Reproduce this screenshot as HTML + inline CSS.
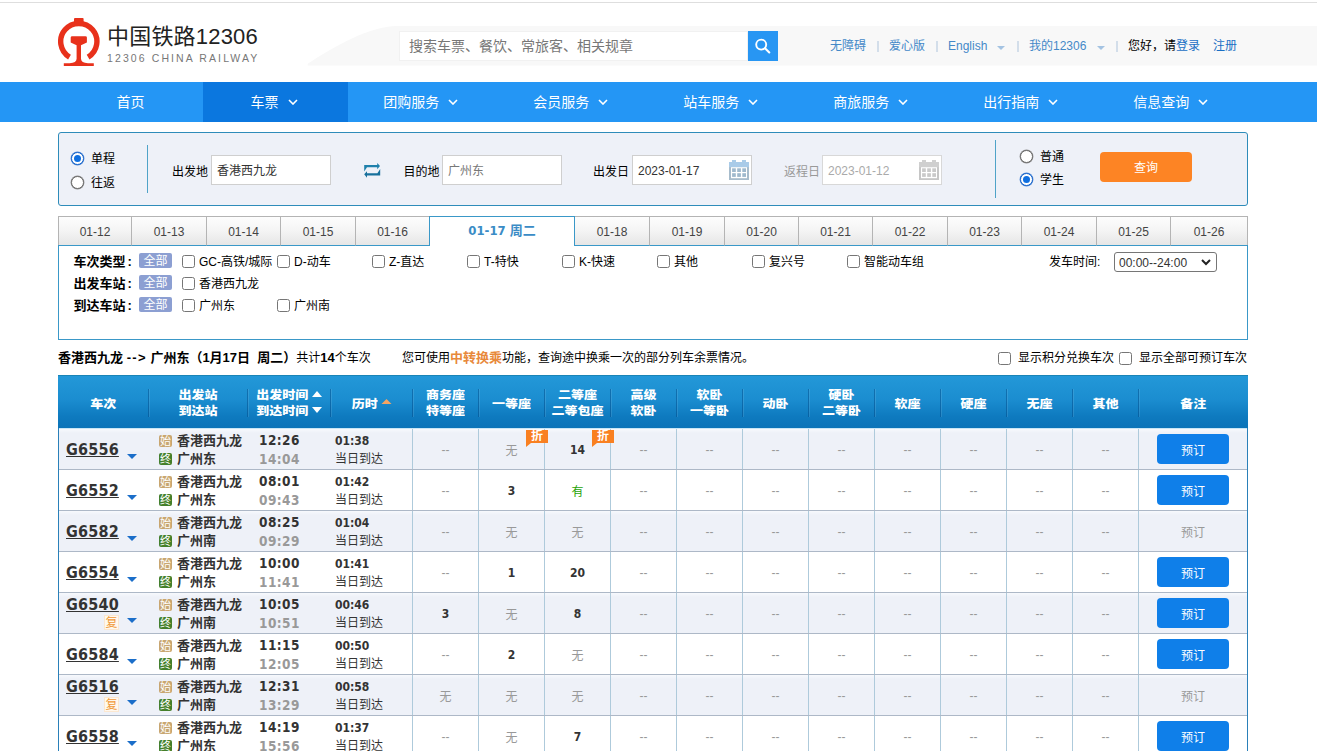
<!DOCTYPE html>
<html lang="zh-CN">
<head>
<meta charset="utf-8">
<title>车票预订 | 中国铁路12306</title>
<style>
*{box-sizing:border-box;margin:0;padding:0}
html,body{width:1317px;height:751px;overflow:hidden;background:#fff}
body{font-family:"Liberation Sans","Noto Sans CJK SC",sans-serif;font-size:12px;color:#000;position:relative}
a{text-decoration:none;color:inherit}
.abs{position:absolute}
/* header */
#topline{position:absolute;left:0;top:2px;width:1317px;height:1px;background:#dedede}
#band{position:absolute;left:300px;top:26px}
#logo{position:absolute;left:58px;top:18px}
#ltitle{position:absolute;left:107px;top:22px;font-size:22px;line-height:30px;color:#222;white-space:nowrap;letter-spacing:.2px}
#lsub{position:absolute;left:107px;top:51px;font-size:10.500px;line-height:14px;color:#777;white-space:nowrap;letter-spacing:2.1px}
#search{position:absolute;left:399px;top:31px;width:349px;height:30px;background:#fff;border:1px solid #f1f1f1;font-size:14px;line-height:28px;color:#777;padding-left:9px;white-space:nowrap}
#sbtn{position:absolute;left:748px;top:31px;width:30px;height:30px;background:#2896f3}
.tl{position:absolute;top:38px;font-size:12px;line-height:16px;color:#4489c8;white-space:nowrap}
.tsep{position:absolute;top:41px;width:2px;height:11px;background:#d3deea}
.tarr{position:absolute;top:45.500px;width:0;height:0;border-left:4px solid transparent;border-right:4px solid transparent;border-top:4px solid #a4c3e2;margin-left:2px}
/* nav */
#nav{position:absolute;left:0;top:82px;width:1317px;height:40px;background:#2496f5}
#nav .it{position:absolute;top:0;height:40px;line-height:40px;font-size:14px;color:#fff;text-align:center;white-space:nowrap;padding-right:3px}
#nav .it.on{background:#0b77df}
#nav svg{display:inline-block;vertical-align:middle;margin-left:9px;margin-top:-2px}
/*GEN*/
/* search panel */
#sp{position:absolute;left:58px;top:132px;width:1190px;height:74px;background:#eef1f8;border:1px solid #2e8cba;border-radius:3px}
.rad{position:absolute;width:13px;height:13px;border-radius:50%;border:1px solid #6a6a6a;background:#fff;box-shadow:0 0 0 .4px #8a8a8a}
.rad.on{border:1px solid #1763c9;box-shadow:0 0 0 .4px #4a86d6}
.rad.on:after{content:"";position:absolute;left:2px;top:2px;width:7px;height:7px;border-radius:50%;background:#0f6fe0}
.lb{position:absolute;font-size:12px;line-height:14px;white-space:nowrap;color:#000}
.vdiv{position:absolute;width:1px;background:#4fa3c8}
.inp{position:absolute;top:155px;width:120px;height:30px;background:#fff;border:1px solid #cfcfcf;font-size:12px;line-height:30px;padding-left:5px;color:#333;white-space:nowrap}
#qbtn{position:absolute;left:1100px;top:152px;width:92px;height:30px;border-radius:4px;background:#fd8424;color:#fff;font-size:12px;line-height:33px;text-align:center}
/* tabs */
.tab{position:absolute;top:216px;height:30px;border:1px solid #b4b4b4;border-left:none;border-bottom:1px solid #3a98c8;background:linear-gradient(#fdfdfd,#f4f4f4 50%,#e6e6e6);font-size:12px;line-height:30px;text-align:center;color:#444}
.tab.on{background:#fff;border:1px solid #3a98c8;border-bottom:none;color:#3a8cc6;font-weight:bold;font-size:13px;line-height:27px;font-family:"DejaVu Sans Condensed","DejaVu Sans","Noto Sans CJK SC",sans-serif;font-stretch:condensed}
/* filter */
#flt{position:absolute;left:58px;top:245px;width:1190px;height:95px;border:1px solid #3a98c8;border-top:none}
.fl{position:absolute;left:73.500px;font-size:13px;line-height:14px;font-weight:bold;white-space:nowrap;letter-spacing:0;font-family:"Liberation Sans","Noto Sans CJK SC",sans-serif}
.all{position:absolute;left:139px;width:33px;height:15px;background:#8c9fd2;color:#fff;font-size:12px;line-height:17px;text-align:center;border-radius:2px;overflow:hidden}
.cb{position:absolute;width:13px;height:13px;border:1px solid #767676;border-radius:2.5px;background:#fff}
.cl{position:absolute;font-size:12px;line-height:14px;white-space:nowrap}
#sel{position:absolute;left:1114px;top:252px;width:103px;height:20px;border:1px solid #767676;border-radius:3px;background:#fff;font-size:12px;line-height:20px;padding-left:4px;color:#333}
/* summary */
.sm{position:absolute;top:351px;font-size:12px;line-height:14px;white-space:nowrap}
.sm b,.bb{font-size:13px;font-weight:bold;font-family:"Liberation Sans","Noto Sans CJK SC",sans-serif;letter-spacing:0}
/* table */
#th{position:absolute;left:58px;top:375px;width:1190px;height:53px;background:linear-gradient(#2398d8 0%,#1b8dd0 45%,#0e7abf 78%,#0b74b8 100%);border-top:1px solid #1a84b6}
.hc{position:absolute;color:#fff;font-weight:900;font-size:13px;line-height:16.600px;text-align:center;white-space:nowrap;letter-spacing:0;transform:scaleY(.9);transform-origin:50% 50%;font-family:"Liberation Sans","Noto Sans CJK SC",sans-serif}
.hs{position:absolute;top:13px;width:2px;height:28px;background:linear-gradient(90deg,rgba(0,70,130,.45) 50%,rgba(255,255,255,.1) 50%)}
.row{position:absolute;left:58px;width:1190px;height:41px;box-shadow:inset 0 1px 0 #adb8c7;border-left:1px solid #2a80b9;border-right:1px solid #2a80b9;background:#fff}
.row.first{box-shadow:inset 0 1px 0 #c9e6f5}
.row.odd{background:linear-gradient(#f9fbfe,#eef1f8 5px)}
.vs{position:absolute;top:1px;width:1px;height:40px;background:#aecadb}
.tn{position:absolute;left:7px;font-family:"DejaVu Sans Condensed","DejaVu Sans",sans-serif;font-stretch:condensed;font-weight:bold;font-size:16px;line-height:20px;color:#333;text-decoration:underline;text-underline-offset:1px;letter-spacing:.2px}
.tri{position:absolute;width:0;height:0;border-left:5px solid transparent;border-right:5px solid transparent;border-top:5px solid #1b6ec9}
.bg{position:absolute;left:100px;width:13px;height:12px;border-radius:2px;color:#fff;font-size:11px;line-height:12px;text-align:center;overflow:hidden;font-style:normal}
.st{position:absolute;left:118px;font-weight:bold;font-size:13px;line-height:14px;color:#333;white-space:nowrap;letter-spacing:0;font-family:"Liberation Sans","Noto Sans CJK SC",sans-serif}
.t1{position:absolute;left:200px;font-family:"DejaVu Sans Condensed","DejaVu Sans",sans-serif;font-stretch:condensed;font-weight:bold;font-size:13.500px;line-height:16px;color:#333;letter-spacing:.45px;white-space:nowrap}
.t2{color:#999}
.du{position:absolute;left:276px;font-family:"DejaVu Sans Condensed","DejaVu Sans",sans-serif;font-stretch:condensed;font-weight:bold;font-size:12px;line-height:14px;color:#333;letter-spacing:0;white-space:nowrap}
.dd{position:absolute;left:276px;font-size:12px;line-height:14px;color:#333;white-space:nowrap}
.c{position:absolute;top:15px;width:66px;height:16px;line-height:16px;text-align:center;font-size:12px;color:#999;white-space:nowrap}
.c.n{top:14.300px;color:#333;font-weight:bold;font-family:"DejaVu Sans Condensed","DejaVu Sans",sans-serif;font-stretch:condensed;letter-spacing:0;font-size:12px}
.c.y{color:#26a306}
.c.d{top:14px}
.bk{position:absolute;left:1098px;top:6px;width:72px;height:30px;border-radius:4px;background:#0f7fe9;color:#fff;font-size:12px;line-height:34px;text-align:center}
.bk.off{background:none;color:#999}
.zhe{position:absolute;top:2px;width:22px;height:13px;background:#f98021;color:#fff;font-size:12px;line-height:13px;font-weight:bold;text-align:center;font-style:normal}
.zhe:after{content:"";position:absolute;left:0;top:13px;width:0;height:0;border-top:4px solid #f98021;border-right:5px solid transparent}
.fx{position:absolute;left:45px;top:23px;width:15px;height:15px;border:1px solid #fbe7d0;background:#fff8ee;color:#f09a3a;font-size:12px;line-height:14px;text-align:center;font-style:normal}
/*/GEN*/</style>
</head>
<body>
<div id="topline"></div>
<!-- HEADER -->
<svg id="band" width="1017" height="40" viewBox="0 0 1017 40"><path d="M7.500 39.5 L8 37.5 C35 20 70 0 97 0 L1017 0 L1017 39.5 Z" fill="#f8f8f8"/></svg>
<svg id="logo" width="42" height="48" viewBox="0 0 42 48">
<path d="M11.5 39.1 A18.1 18.1 0 1 1 30.100 39.1" fill="none" stroke="#e8311b" stroke-width="5.4"/>
<rect x="16" y="0" width="9.6" height="5" rx="1" fill="#e8311b"/>
<path d="M12.700 19.6 q0-1.4 1.4-1.4 h13.4 q1.4 0 1.4 1.4 v5 l-5.900 2.6 v13.5 q0 4 7 4.5 h5.8 v2.8 H5.8 v-2.8 h5.8 q7-.5 7-4.5 v-13.5 l-5.900-2.6z" fill="#e8311b"/>
</svg>
<div id="ltitle">中国铁路12306</div>
<div id="lsub">12306 CHINA RAILWAY</div>
<div id="search">搜索车票、餐饮、常旅客、相关规章</div>
<div id="sbtn"><svg width="30" height="30" viewBox="0 0 30 30"><circle cx="13.2" cy="13.6" r="5" fill="none" stroke="#fff" stroke-width="1.9"/><path d="M17 17.3 L21.3 21.5" stroke="#fff" stroke-width="2.1" stroke-linecap="round"/></svg></div>
<a class="tl" style="left:830px">无障碍</a><i class="tsep" style="left:877px"></i>
<a class="tl" style="left:889px">爱心版</a><i class="tsep" style="left:936px"></i>
<a class="tl" style="left:948px">English</a><i class="tarr" style="left:995px"></i><i class="tsep" style="left:1017px"></i>
<a class="tl" style="left:1029px">我的12306</a><i class="tarr" style="left:1095px"></i><i class="tsep" style="left:1116px"></i>
<span class="tl" style="left:1128px;color:#000">您好，请<a style="color:#1a6fc4">登录</a></span>
<a class="tl" style="left:1213px;color:#1a6fc4">注册</a>
<!-- NAV -->
<div id="nav">
<a class="it" style="left:58px;width:145px;padding-right:0">首页</a>
<a class="it on" style="left:203px;width:145px">车票<svg width="10" height="6" viewBox="0 0 10 6"><path d="M1 1l4 4 4-4" fill="none" stroke="#fff" stroke-width="1.6"/></svg></a>
<a class="it" style="left:348px;width:150px;padding-right:4.500px">团购服务<svg width="10" height="6" viewBox="0 0 10 6"><path d="M1 1l4 4 4-4" fill="none" stroke="#fff" stroke-width="1.6"/></svg></a>
<a class="it" style="left:498px;width:150px;padding-right:4.500px">会员服务<svg width="10" height="6" viewBox="0 0 10 6"><path d="M1 1l4 4 4-4" fill="none" stroke="#fff" stroke-width="1.6"/></svg></a>
<a class="it" style="left:648px;width:150px;padding-right:4.500px">站车服务<svg width="10" height="6" viewBox="0 0 10 6"><path d="M1 1l4 4 4-4" fill="none" stroke="#fff" stroke-width="1.6"/></svg></a>
<a class="it" style="left:798px;width:150px;padding-right:4.500px">商旅服务<svg width="10" height="6" viewBox="0 0 10 6"><path d="M1 1l4 4 4-4" fill="none" stroke="#fff" stroke-width="1.6"/></svg></a>
<a class="it" style="left:948px;width:150px;padding-right:4.500px">出行指南<svg width="10" height="6" viewBox="0 0 10 6"><path d="M1 1l4 4 4-4" fill="none" stroke="#fff" stroke-width="1.6"/></svg></a>
<a class="it" style="left:1098px;width:150px;padding-right:4.500px">信息查询<svg width="10" height="6" viewBox="0 0 10 6"><path d="M1 1l4 4 4-4" fill="none" stroke="#fff" stroke-width="1.6"/></svg></a>
</div>
<!-- SEARCHPANEL -->
<div id="sp"></div>
<i class="rad on" style="left:71px;top:152px"></i><span class="lb" style="left:91px;top:152px">单程</span>
<i class="rad" style="left:71px;top:176px"></i><span class="lb" style="left:91px;top:176px">往返</span>
<i class="vdiv" style="left:147px;top:145px;height:48px"></i>
<span class="lb" style="left:172px;top:165px">出发地</span><div class="inp" style="left:211px">香港西九龙</div>
<svg class="abs" style="left:364px;top:163px" width="17" height="15" viewBox="0 0 17 15"><path d="M0.200 2H13.200V0L16 3.100L13.200 6.200V4.200H3L0.200 8.400Z" fill="#1e80ab"/><path d="M16.200 12.400H3V14.800L0.200 11.300L3 8.200V10.200H13.400L16.200 6Z" fill="#17709c"/></svg>
<span class="lb" style="left:403.500px;top:165px">目的地</span><div class="inp" style="left:442px;color:#777">广州东</div>
<span class="lb" style="left:593px;top:165px">出发日</span><div class="inp" style="left:632px">2023-01-17</div>
<div class="abs" style="left:729px;top:160px;width:20px;height:20px"><svg width="20" height="20" viewBox="0 0 20 20"><rect x="3" y="0" width="4" height="3" fill="#a9cbe8"/><rect x="13" y="0" width="4" height="3" fill="#a9cbe8"/><rect x="0" y="2" width="20" height="18" fill="#a7bccc"/><rect x="0" y="2" width="20" height="5.200" fill="#a9cbe8"/><rect x="2" y="7.200" width="16" height="11" fill="#fff"/><g fill="#9fb9cd"><rect x="3.1" y="8.3" width="3.7" height="3.7"/><rect x="8.2" y="8.3" width="3.7" height="3.7"/><rect x="13.3" y="8.3" width="3.7" height="3.7"/><rect x="3.1" y="13.2" width="3.7" height="3.7"/><rect x="8.2" y="13.2" width="3.7" height="3.7"/><rect x="13.3" y="13.2" width="3.7" height="3.7"/></g></svg></div>
<span class="lb" style="left:784px;top:165px;color:#999">返程日</span><div class="inp" style="left:822px;color:#aaa;border-color:#d8d8d8">2023-01-12</div>
<div class="abs" style="left:919px;top:160px;width:20px;height:20px"><svg width="20" height="20" viewBox="0 0 20 20"><rect x="3" y="0" width="4" height="3" fill="#cfcfcf"/><rect x="13" y="0" width="4" height="3" fill="#cfcfcf"/><rect x="0" y="2" width="20" height="18" fill="#c6c6c6"/><rect x="0" y="2" width="20" height="5.200" fill="#cfcfcf"/><rect x="2" y="7.200" width="16" height="11" fill="#fff"/><g fill="#c9c9c9"><rect x="3.1" y="8.3" width="3.7" height="3.7"/><rect x="8.2" y="8.3" width="3.7" height="3.7"/><rect x="13.3" y="8.3" width="3.7" height="3.7"/><rect x="3.1" y="13.2" width="3.7" height="3.7"/><rect x="8.2" y="13.2" width="3.7" height="3.7"/><rect x="13.3" y="13.2" width="3.7" height="3.7"/></g></svg></div>
<i class="vdiv" style="left:995px;top:140px;height:58px"></i>
<i class="rad" style="left:1020px;top:150px"></i><span class="lb" style="left:1040px;top:150px">普通</span>
<i class="rad on" style="left:1020px;top:173px"></i><span class="lb" style="left:1040px;top:173px">学生</span>
<div id="qbtn">查询</div>
<!-- /SEARCHPANEL -->
<!-- DATETABS -->
<div class="tab" style="left:58px;width:74px;border-left:1px solid #b4b4b4">01-12</div>
<div class="tab" style="left:132px;width:75px">01-13</div>
<div class="tab" style="left:207px;width:74px">01-14</div>
<div class="tab" style="left:281px;width:75px">01-15</div>
<div class="tab" style="left:356px;width:74px">01-16</div>
<div class="tab on" style="left:429px;width:146px">01-17 周二</div>
<div class="tab" style="left:575px;width:75px">01-18</div>
<div class="tab" style="left:650px;width:75px">01-19</div>
<div class="tab" style="left:725px;width:74px">01-20</div>
<div class="tab" style="left:799px;width:74px">01-21</div>
<div class="tab" style="left:873px;width:75px">01-22</div>
<div class="tab" style="left:948px;width:74px">01-23</div>
<div class="tab" style="left:1022px;width:75px">01-24</div>
<div class="tab" style="left:1097px;width:74px">01-25</div>
<div class="tab" style="left:1171px;width:77px">01-26</div>
<!-- /DATETABS -->
<!-- FILTER -->
<div id="flt"></div>
<span class="fl" style="top:254.6px">车次类型<span style="margin-left:2px">:</span></span><span class="all" style="top:252.5px">全部</span>
<i class="cb" style="left:182px;top:255px"></i><span class="cl" style="left:199px;top:255px">GC-高铁/城际</span>
<i class="cb" style="left:277px;top:255px"></i><span class="cl" style="left:294px;top:255px">D-动车</span>
<i class="cb" style="left:372px;top:255px"></i><span class="cl" style="left:389px;top:255px">Z-直达</span>
<i class="cb" style="left:467px;top:255px"></i><span class="cl" style="left:484px;top:255px">T-特快</span>
<i class="cb" style="left:562px;top:255px"></i><span class="cl" style="left:579px;top:255px">K-快速</span>
<i class="cb" style="left:657px;top:255px"></i><span class="cl" style="left:674px;top:255px">其他</span>
<i class="cb" style="left:752px;top:255px"></i><span class="cl" style="left:769px;top:255px">复兴号</span>
<i class="cb" style="left:847px;top:255px"></i><span class="cl" style="left:864px;top:255px">智能动车组</span>
<span class="fl" style="top:276.6px">出发车站<span style="margin-left:2px">:</span></span><span class="all" style="top:274.5px">全部</span>
<i class="cb" style="left:182px;top:277px"></i><span class="cl" style="left:199px;top:277px">香港西九龙</span>
<span class="fl" style="top:298.6px">到达车站<span style="margin-left:2px">:</span></span><span class="all" style="top:296.5px">全部</span>
<i class="cb" style="left:182px;top:299px"></i><span class="cl" style="left:199px;top:299px">广州东</span>
<i class="cb" style="left:277px;top:299px"></i><span class="cl" style="left:294px;top:299px">广州南</span>
<span class="cl" style="left:1049px;top:255px">发车时间:</span>
<div id="sel">00:00--24:00<svg class="abs" style="right:5px;top:6px" width="10" height="7" viewBox="0 0 10 7"><path d="M1 1l4 4 4-4" fill="none" stroke="#222" stroke-width="2"/></svg></div>
<!-- /FILTER -->
<!-- SUMMARY -->
<span class="sm" style="left:58px"><b>香港西九龙 <span style="letter-spacing:1.3px">--&gt;</span> 广州东（1月17日&nbsp; 周二）</b>共计<b>14</b>个车次</span>
<span class="sm" style="left:402px">您可使用<b style="color:#e8893b">中转换乘</b>功能，查询途中换乘一次的部分列车余票情况。</span>
<i class="cb" style="left:998px;top:352px"></i><span class="sm" style="left:1018px">显示积分兑换车次</span>
<i class="cb" style="left:1119px;top:352px"></i><span class="sm" style="left:1139px">显示全部可预订车次</span>
<!-- /SUMMARY -->
<!-- TABLE -->
<div id="th">
<div class="hc" style="left:0.0px;top:19.7px;width:90.5px">车次</div>
<i class="hs" style="left:90.0px"></i>
<div class="hc" style="left:90.5px;top:10.9px;width:99.0px">出发站<br>到达站</div>
<i class="hs" style="left:189.0px"></i>
<div class="hc" style="left:189.5px;top:10.9px;width:82.5px;padding-right:13px">出发时间<br>到达时间</div>
<svg class="abs" style="left:254px;top:14.900px" width="10" height="6" viewBox="0 0 10 6"><path d="M0 6L5 0l5 6z" fill="#fff"/></svg>
<svg class="abs" style="left:254px;top:30.700px" width="10" height="6" viewBox="0 0 10 6"><path d="M0 0L5 6l5-6z" fill="#fff"/></svg>
<i class="hs" style="left:271.5px"></i>
<div class="hc" style="left:272.0px;top:19.7px;width:82.5px;padding-right:13px">历时</div>
<svg class="abs" style="left:323px;top:22.600px" width="11" height="5.500" viewBox="0 0 11 6" preserveAspectRatio="none"><path d="M0 6L5.5 0l5.500 6z" fill="#f4a463"/></svg>
<i class="hs" style="left:354.0px"></i>
<div class="hc" style="left:354.5px;top:10.9px;width:66.0px">商务座<br>特等座</div>
<i class="hs" style="left:420.0px"></i>
<div class="hc" style="left:420.5px;top:19.7px;width:66.0px">一等座</div>
<i class="hs" style="left:486.0px"></i>
<div class="hc" style="left:486.5px;top:10.9px;width:66.0px">二等座<br>二等包座</div>
<i class="hs" style="left:552.0px"></i>
<div class="hc" style="left:552.5px;top:10.9px;width:66.0px">高级<br>软卧</div>
<i class="hs" style="left:618.0px"></i>
<div class="hc" style="left:618.5px;top:10.9px;width:66.0px">软卧<br>一等卧</div>
<i class="hs" style="left:684.0px"></i>
<div class="hc" style="left:684.5px;top:19.7px;width:66.0px">动卧</div>
<i class="hs" style="left:750.0px"></i>
<div class="hc" style="left:750.5px;top:10.9px;width:66.0px">硬卧<br>二等卧</div>
<i class="hs" style="left:816.0px"></i>
<div class="hc" style="left:816.5px;top:19.7px;width:66.0px">软座</div>
<i class="hs" style="left:882.0px"></i>
<div class="hc" style="left:882.5px;top:19.7px;width:66.0px">硬座</div>
<i class="hs" style="left:948.0px"></i>
<div class="hc" style="left:948.5px;top:19.7px;width:66.0px">无座</div>
<i class="hs" style="left:1014.0px"></i>
<div class="hc" style="left:1014.5px;top:19.7px;width:66.0px">其他</div>
<i class="hs" style="left:1080.0px"></i>
<div class="hc" style="left:1080.5px;top:19.7px;width:109.5px">备注</div>
</div>
<div class="row odd first" style="top:428px">
<i class="vs" style="left:353.0px"></i>
<i class="vs" style="left:419.0px"></i>
<i class="vs" style="left:485.0px"></i>
<i class="vs" style="left:551.0px"></i>
<i class="vs" style="left:617.0px"></i>
<i class="vs" style="left:683.0px"></i>
<i class="vs" style="left:749.0px"></i>
<i class="vs" style="left:815.0px"></i>
<i class="vs" style="left:881.0px"></i>
<i class="vs" style="left:947.0px"></i>
<i class="vs" style="left:1013.0px"></i>
<i class="vs" style="left:1079.0px"></i>
<span class="tn" style="top:12px">G6556</span><i class="tri" style="left:68px;top:26px"></i>
<i class="bg" style="top:7px;background:#c8a670">始</i><span class="st" style="top:6.300px">香港西九龙</span>
<i class="bg" style="top:25px;background:#447f2a">终</i><span class="st" style="top:24.400px">广州东</span>
<span class="t1" style="top:4px">12:26</span><span class="t1 t2" style="top:22.600px">14:04</span>
<span class="du" style="top:6px">01:38</span><span class="dd" style="top:24px">当日到达</span>
<span class="c d" style="left:353.5px">--</span>
<span class="c" style="left:419.5px">无</span>
<i class="zhe" style="left:467.0px">折</i>
<span class="c n" style="left:485.5px">14</span>
<i class="zhe" style="left:533.0px">折</i>
<span class="c d" style="left:551.5px">--</span>
<span class="c d" style="left:617.5px">--</span>
<span class="c d" style="left:683.5px">--</span>
<span class="c d" style="left:749.5px">--</span>
<span class="c d" style="left:815.5px">--</span>
<span class="c d" style="left:881.5px">--</span>
<span class="c d" style="left:947.5px">--</span>
<span class="c d" style="left:1013.5px">--</span>
<a class="bk">预订</a>
</div>
<div class="row" style="top:469px">
<i class="vs" style="left:353.0px"></i>
<i class="vs" style="left:419.0px"></i>
<i class="vs" style="left:485.0px"></i>
<i class="vs" style="left:551.0px"></i>
<i class="vs" style="left:617.0px"></i>
<i class="vs" style="left:683.0px"></i>
<i class="vs" style="left:749.0px"></i>
<i class="vs" style="left:815.0px"></i>
<i class="vs" style="left:881.0px"></i>
<i class="vs" style="left:947.0px"></i>
<i class="vs" style="left:1013.0px"></i>
<i class="vs" style="left:1079.0px"></i>
<span class="tn" style="top:12px">G6552</span><i class="tri" style="left:68px;top:26px"></i>
<i class="bg" style="top:7px;background:#c8a670">始</i><span class="st" style="top:6.300px">香港西九龙</span>
<i class="bg" style="top:25px;background:#447f2a">终</i><span class="st" style="top:24.400px">广州东</span>
<span class="t1" style="top:4px">08:01</span><span class="t1 t2" style="top:22.600px">09:43</span>
<span class="du" style="top:6px">01:42</span><span class="dd" style="top:24px">当日到达</span>
<span class="c d" style="left:353.5px">--</span>
<span class="c n" style="left:419.5px">3</span>
<span class="c y" style="left:485.5px">有</span>
<span class="c d" style="left:551.5px">--</span>
<span class="c d" style="left:617.5px">--</span>
<span class="c d" style="left:683.5px">--</span>
<span class="c d" style="left:749.5px">--</span>
<span class="c d" style="left:815.5px">--</span>
<span class="c d" style="left:881.5px">--</span>
<span class="c d" style="left:947.5px">--</span>
<span class="c d" style="left:1013.5px">--</span>
<a class="bk">预订</a>
</div>
<div class="row odd" style="top:510px">
<i class="vs" style="left:353.0px"></i>
<i class="vs" style="left:419.0px"></i>
<i class="vs" style="left:485.0px"></i>
<i class="vs" style="left:551.0px"></i>
<i class="vs" style="left:617.0px"></i>
<i class="vs" style="left:683.0px"></i>
<i class="vs" style="left:749.0px"></i>
<i class="vs" style="left:815.0px"></i>
<i class="vs" style="left:881.0px"></i>
<i class="vs" style="left:947.0px"></i>
<i class="vs" style="left:1013.0px"></i>
<i class="vs" style="left:1079.0px"></i>
<span class="tn" style="top:12px">G6582</span><i class="tri" style="left:68px;top:26px"></i>
<i class="bg" style="top:7px;background:#c8a670">始</i><span class="st" style="top:6.300px">香港西九龙</span>
<i class="bg" style="top:25px;background:#447f2a">终</i><span class="st" style="top:24.400px">广州南</span>
<span class="t1" style="top:4px">08:25</span><span class="t1 t2" style="top:22.600px">09:29</span>
<span class="du" style="top:6px">01:04</span><span class="dd" style="top:24px">当日到达</span>
<span class="c d" style="left:353.5px">--</span>
<span class="c" style="left:419.5px">无</span>
<span class="c" style="left:485.5px">无</span>
<span class="c d" style="left:551.5px">--</span>
<span class="c d" style="left:617.5px">--</span>
<span class="c d" style="left:683.5px">--</span>
<span class="c d" style="left:749.5px">--</span>
<span class="c d" style="left:815.5px">--</span>
<span class="c d" style="left:881.5px">--</span>
<span class="c d" style="left:947.5px">--</span>
<span class="c d" style="left:1013.5px">--</span>
<a class="bk off">预订</a>
</div>
<div class="row" style="top:551px">
<i class="vs" style="left:353.0px"></i>
<i class="vs" style="left:419.0px"></i>
<i class="vs" style="left:485.0px"></i>
<i class="vs" style="left:551.0px"></i>
<i class="vs" style="left:617.0px"></i>
<i class="vs" style="left:683.0px"></i>
<i class="vs" style="left:749.0px"></i>
<i class="vs" style="left:815.0px"></i>
<i class="vs" style="left:881.0px"></i>
<i class="vs" style="left:947.0px"></i>
<i class="vs" style="left:1013.0px"></i>
<i class="vs" style="left:1079.0px"></i>
<span class="tn" style="top:12px">G6554</span><i class="tri" style="left:68px;top:26px"></i>
<i class="bg" style="top:7px;background:#c8a670">始</i><span class="st" style="top:6.300px">香港西九龙</span>
<i class="bg" style="top:25px;background:#447f2a">终</i><span class="st" style="top:24.400px">广州东</span>
<span class="t1" style="top:4px">10:00</span><span class="t1 t2" style="top:22.600px">11:41</span>
<span class="du" style="top:6px">01:41</span><span class="dd" style="top:24px">当日到达</span>
<span class="c d" style="left:353.5px">--</span>
<span class="c n" style="left:419.5px">1</span>
<span class="c n" style="left:485.5px">20</span>
<span class="c d" style="left:551.5px">--</span>
<span class="c d" style="left:617.5px">--</span>
<span class="c d" style="left:683.5px">--</span>
<span class="c d" style="left:749.5px">--</span>
<span class="c d" style="left:815.5px">--</span>
<span class="c d" style="left:881.5px">--</span>
<span class="c d" style="left:947.5px">--</span>
<span class="c d" style="left:1013.5px">--</span>
<a class="bk">预订</a>
</div>
<div class="row odd" style="top:592px">
<i class="vs" style="left:353.0px"></i>
<i class="vs" style="left:419.0px"></i>
<i class="vs" style="left:485.0px"></i>
<i class="vs" style="left:551.0px"></i>
<i class="vs" style="left:617.0px"></i>
<i class="vs" style="left:683.0px"></i>
<i class="vs" style="left:749.0px"></i>
<i class="vs" style="left:815.0px"></i>
<i class="vs" style="left:881.0px"></i>
<i class="vs" style="left:947.0px"></i>
<i class="vs" style="left:1013.0px"></i>
<i class="vs" style="left:1079.0px"></i>
<span class="tn" style="top:3px">G6540</span><i class="fx">复</i><i class="tri" style="left:68px;top:26px"></i>
<i class="bg" style="top:7px;background:#c8a670">始</i><span class="st" style="top:6.300px">香港西九龙</span>
<i class="bg" style="top:25px;background:#447f2a">终</i><span class="st" style="top:24.400px">广州南</span>
<span class="t1" style="top:4px">10:05</span><span class="t1 t2" style="top:22.600px">10:51</span>
<span class="du" style="top:6px">00:46</span><span class="dd" style="top:24px">当日到达</span>
<span class="c n" style="left:353.5px">3</span>
<span class="c" style="left:419.5px">无</span>
<span class="c n" style="left:485.5px">8</span>
<span class="c d" style="left:551.5px">--</span>
<span class="c d" style="left:617.5px">--</span>
<span class="c d" style="left:683.5px">--</span>
<span class="c d" style="left:749.5px">--</span>
<span class="c d" style="left:815.5px">--</span>
<span class="c d" style="left:881.5px">--</span>
<span class="c d" style="left:947.5px">--</span>
<span class="c d" style="left:1013.5px">--</span>
<a class="bk">预订</a>
</div>
<div class="row" style="top:633px">
<i class="vs" style="left:353.0px"></i>
<i class="vs" style="left:419.0px"></i>
<i class="vs" style="left:485.0px"></i>
<i class="vs" style="left:551.0px"></i>
<i class="vs" style="left:617.0px"></i>
<i class="vs" style="left:683.0px"></i>
<i class="vs" style="left:749.0px"></i>
<i class="vs" style="left:815.0px"></i>
<i class="vs" style="left:881.0px"></i>
<i class="vs" style="left:947.0px"></i>
<i class="vs" style="left:1013.0px"></i>
<i class="vs" style="left:1079.0px"></i>
<span class="tn" style="top:12px">G6584</span><i class="tri" style="left:68px;top:26px"></i>
<i class="bg" style="top:7px;background:#c8a670">始</i><span class="st" style="top:6.300px">香港西九龙</span>
<i class="bg" style="top:25px;background:#447f2a">终</i><span class="st" style="top:24.400px">广州南</span>
<span class="t1" style="top:4px">11:15</span><span class="t1 t2" style="top:22.600px">12:05</span>
<span class="du" style="top:6px">00:50</span><span class="dd" style="top:24px">当日到达</span>
<span class="c d" style="left:353.5px">--</span>
<span class="c n" style="left:419.5px">2</span>
<span class="c" style="left:485.5px">无</span>
<span class="c d" style="left:551.5px">--</span>
<span class="c d" style="left:617.5px">--</span>
<span class="c d" style="left:683.5px">--</span>
<span class="c d" style="left:749.5px">--</span>
<span class="c d" style="left:815.5px">--</span>
<span class="c d" style="left:881.5px">--</span>
<span class="c d" style="left:947.5px">--</span>
<span class="c d" style="left:1013.5px">--</span>
<a class="bk">预订</a>
</div>
<div class="row odd" style="top:674px">
<i class="vs" style="left:353.0px"></i>
<i class="vs" style="left:419.0px"></i>
<i class="vs" style="left:485.0px"></i>
<i class="vs" style="left:551.0px"></i>
<i class="vs" style="left:617.0px"></i>
<i class="vs" style="left:683.0px"></i>
<i class="vs" style="left:749.0px"></i>
<i class="vs" style="left:815.0px"></i>
<i class="vs" style="left:881.0px"></i>
<i class="vs" style="left:947.0px"></i>
<i class="vs" style="left:1013.0px"></i>
<i class="vs" style="left:1079.0px"></i>
<span class="tn" style="top:3px">G6516</span><i class="fx">复</i><i class="tri" style="left:68px;top:26px"></i>
<i class="bg" style="top:7px;background:#c8a670">始</i><span class="st" style="top:6.300px">香港西九龙</span>
<i class="bg" style="top:25px;background:#447f2a">终</i><span class="st" style="top:24.400px">广州南</span>
<span class="t1" style="top:4px">12:31</span><span class="t1 t2" style="top:22.600px">13:29</span>
<span class="du" style="top:6px">00:58</span><span class="dd" style="top:24px">当日到达</span>
<span class="c" style="left:353.5px">无</span>
<span class="c" style="left:419.5px">无</span>
<span class="c" style="left:485.5px">无</span>
<span class="c d" style="left:551.5px">--</span>
<span class="c d" style="left:617.5px">--</span>
<span class="c d" style="left:683.5px">--</span>
<span class="c d" style="left:749.5px">--</span>
<span class="c d" style="left:815.5px">--</span>
<span class="c d" style="left:881.5px">--</span>
<span class="c d" style="left:947.5px">--</span>
<span class="c d" style="left:1013.5px">--</span>
<a class="bk off">预订</a>
</div>
<div class="row" style="top:715px">
<i class="vs" style="left:353.0px"></i>
<i class="vs" style="left:419.0px"></i>
<i class="vs" style="left:485.0px"></i>
<i class="vs" style="left:551.0px"></i>
<i class="vs" style="left:617.0px"></i>
<i class="vs" style="left:683.0px"></i>
<i class="vs" style="left:749.0px"></i>
<i class="vs" style="left:815.0px"></i>
<i class="vs" style="left:881.0px"></i>
<i class="vs" style="left:947.0px"></i>
<i class="vs" style="left:1013.0px"></i>
<i class="vs" style="left:1079.0px"></i>
<span class="tn" style="top:12px">G6558</span><i class="tri" style="left:68px;top:26px"></i>
<i class="bg" style="top:7px;background:#c8a670">始</i><span class="st" style="top:6.300px">香港西九龙</span>
<i class="bg" style="top:25px;background:#447f2a">终</i><span class="st" style="top:24.400px">广州东</span>
<span class="t1" style="top:4px">14:19</span><span class="t1 t2" style="top:22.600px">15:56</span>
<span class="du" style="top:6px">01:37</span><span class="dd" style="top:24px">当日到达</span>
<span class="c d" style="left:353.5px">--</span>
<span class="c" style="left:419.5px">无</span>
<span class="c n" style="left:485.5px">7</span>
<span class="c d" style="left:551.5px">--</span>
<span class="c d" style="left:617.5px">--</span>
<span class="c d" style="left:683.5px">--</span>
<span class="c d" style="left:749.5px">--</span>
<span class="c d" style="left:815.5px">--</span>
<span class="c d" style="left:881.5px">--</span>
<span class="c d" style="left:947.5px">--</span>
<span class="c d" style="left:1013.5px">--</span>
<a class="bk">预订</a>
</div>
<!-- /TABLE -->
</body>
</html>
